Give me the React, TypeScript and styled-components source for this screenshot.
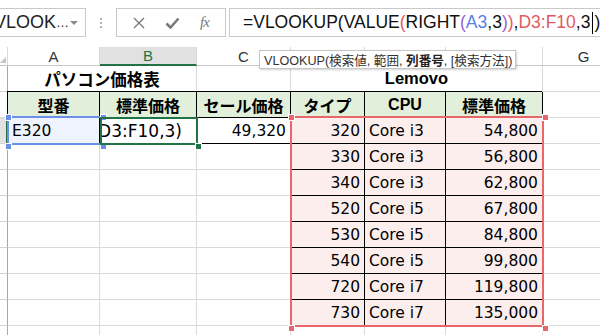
import React from 'react'
import styled, { createGlobalStyle } from 'styled-components'

const GlobalStyle = createGlobalStyle`
  html, body { margin: 0; padding: 0; background: #fff; }
  body {
    width: 600px;
    height: 335px;
    overflow: hidden;
    font-family: "Liberation Sans", "Noto Sans CJK JP", sans-serif;
  }
`

const GREEN = '#217346'
const RED = '#e8676b'
const BLUE = '#6b90ea'
const COLS = [8, 92, 97, 94, 74, 81, 97, 82]

const Page = styled.div`
  position: relative;
  width: 600px;
  height: 335px;
  overflow: hidden;
  background: #fff;
`

/* ---------- formula bar ---------- */

const Toolbar = styled.div`
  display: flex;
  align-items: flex-start;
  height: 47px;
  padding-top: 8px;
  box-sizing: border-box;
`

const Box = styled.div`
  height: 29px;
  box-sizing: border-box;
  border: 1px solid #c9c9c9;
  background: #fff;
  display: flex;
  align-items: center;
`

const NameBox = styled(Box)`
  margin-left: -20px;
  width: 106px;
  padding-left: 13px;
  font-size: 18px;
  color: #222;
  position: relative;
`

const Ellipsis = styled.span`
  font-size: 13px;
`

const DropArrow = styled.span`
  position: absolute;
  right: 7px;
  top: 12px;
  width: 0;
  height: 0;
  border-left: 4px solid transparent;
  border-right: 4px solid transparent;
  border-top: 4px solid #8a8a8a;
`

const Grip = styled.div`
  width: 30px;
  height: 29px;
  display: flex;
  align-items: center;
  justify-content: center;
`

const FuncBox = styled(Box)`
  width: 110px;
  justify-content: space-around;
  padding: 0 6px;
`

const Fx = styled.span`
  font-family: "Liberation Serif", serif;
  font-style: italic;
  font-size: 15px;
  color: #7a7a7a;
  letter-spacing: -1px;
`

const FormulaBox = styled(Box)`
  margin-left: 3px;
  flex: 1;
  margin-right: -20px;
  padding-left: 13px;
  font-size: 17.5px;
  color: #111;
  white-space: nowrap;
`

const Tok = styled.span<{ $c?: string }>`
  color: ${p => p.$c ?? '#111'};
`

const Caret = styled.span`
  display: inline-block;
  width: 1px;
  height: 22px;
  background: #000;
  vertical-align: middle;
  margin: 0 1px 0 2px;
`

/* ---------- sheet ---------- */

const Sheet = styled.div`
  display: grid;
  grid-template-columns: ${COLS.map(w => w + 'px').join(' ')};
  grid-template-rows: 19px repeat(11, 26px);
`

const ColHead = styled.div<{ $sel?: boolean }>`
  box-sizing: border-box;
  display: flex;
  align-items: center;
  justify-content: center;
  font-size: 15px;
  color: ${p => (p.$sel ? GREEN : '#333')};
  background: ${p => (p.$sel ? '#e1e1e1' : '#fff')};
  border-right: 1px solid #dadada;
  border-bottom: ${p => (p.$sel ? `2px solid ${GREEN}` : '1px solid #c8c8c8')};
`

const Corner = styled(ColHead)`
  position: relative;
  &::after {
    content: '';
    position: absolute;
    right: 1px;
    bottom: 2px;
    border-left: 6px solid transparent;
    border-bottom: 6px solid #c4c4c4;
  }
`

const RowHead = styled.div<{ $r: number; $sel?: boolean }>`
  grid-column: 1;
  grid-row: ${p => p.$r + 1};
  box-sizing: border-box;
  background: ${p => (p.$sel ? '#e1e1e1' : '#fff')};
  border-bottom: 1px solid #d4d4d4;
  border-right: ${p => (p.$sel ? `2px solid ${GREEN}` : '1px solid #a8a8a8')};
`

type Kind = 'title' | 'head' | 'data' | 'edit' | 'empty'

const Cell = styled.div<{
  $c: number
  $r: number
  $span: number
  $kind: Kind
  $align: string
  $bg: string
  $edge: boolean
}>`
  grid-column: ${p => p.$c} / span ${p => p.$span};
  grid-row: ${p => p.$r + 1};
  box-sizing: border-box;
  display: flex;
  align-items: center;
  justify-content: ${p => p.$align};
  padding: 0 ${p => (p.$kind === 'edit' ? '14px' : '4px')} 0 4px;
  overflow: hidden;
  white-space: nowrap;
  background: ${p => p.$bg};
  border-right: 1px solid ${p => (p.$edge ? '#000' : '#d9d9d9')};
  border-bottom: 1px solid ${p => (p.$edge ? '#000' : '#d9d9d9')};
  box-shadow: ${p => (p.$edge ? '-1px -1px 0 0 #000' : 'none')};
  color: #000;
  font-family: ${p =>
    p.$kind === 'data' || p.$kind === 'edit'
      ? '"DejaVu Sans", "Noto Sans CJK JP", sans-serif'
      : '"Liberation Sans", "Noto Sans CJK JP", sans-serif'};
  font-size: ${p =>
    p.$kind === 'title' ? '16.5px' : p.$kind === 'head' ? '16px' : p.$kind === 'edit' ? '17px' : '15.5px'};
  font-weight: ${p => (p.$kind === 'title' || p.$kind === 'head' ? 700 : 400)};
`

/* ---------- overlays ---------- */

const Range = styled.div<{ $color: string; $w: number }>`
  position: absolute;
  box-sizing: border-box;
  border: ${p => p.$w}px solid ${p => p.$color};
  pointer-events: none;
`

const Handle = styled.span<{ $color: string }>`
  position: absolute;
  width: 5px;
  height: 5px;
  background: ${p => p.$color};
  border: 1px solid #fff;
`

const Tooltip = styled.div`
  position: absolute;
  left: 259px;
  top: 50px;
  width: 257px;
  height: 19px;
  box-sizing: border-box;
  border: 1px solid #c6c6c6;
  background: #fff;
  box-shadow: 1px 1px 2px rgba(0, 0, 0, 0.18);
  font-size: 12.6px;
  color: #333;
  display: flex;
  align-items: center;
  padding-left: 4px;
  white-space: pre;
`

const Bold = styled.b`
  font-weight: 700;
  color: #222;
`

type Def = {
  c: number
  r: number
  span?: number
  kind?: Kind
  text?: React.ReactNode
  align?: string
  bg?: string
  edge?: boolean
}

const lenovo: [string, string, string][] = [
  ['320', 'Core i3', '54,800'],
  ['330', 'Core i3', '56,800'],
  ['340', 'Core i3', '62,800'],
  ['520', 'Core i5', '67,800'],
  ['530', 'Core i5', '84,800'],
  ['540', 'Core i5', '99,800'],
  ['720', 'Core i7', '119,800'],
  ['730', 'Core i7', '135,000'],
]

const HEAD_BG = '#e2efda'
const PINK = '#fdeeee'

function buildCells(): Def[] {
  const cells: Def[] = []
  // row 1
  cells.push({ c: 2, r: 1, span: 2, kind: 'title', text: 'パソコン価格表', align: 'center' })
  cells.push({ c: 4, r: 1 })
  cells.push({ c: 5, r: 1, span: 3, kind: 'title', text: 'Lemovo', align: 'center' })
  cells.push({ c: 8, r: 1 })
  // row 2
  const heads = ['型番', '標準価格', 'セール価格', 'タイプ', 'CPU', '標準価格']
  heads.forEach((h, i) =>
    cells.push({ c: i + 2, r: 2, kind: 'head', text: h, align: 'center', bg: HEAD_BG, edge: true })
  )
  cells.push({ c: 8, r: 2 })
  // rows 3..11
  for (let r = 3; r <= 11; r++) {
    const d = lenovo[r - 3]
    if (r === 3) {
      cells.push({ c: 2, r, kind: 'data', text: 'E320', align: 'flex-start', bg: '#eef3fd', edge: true })
      cells.push({
        c: 3,
        r,
        kind: 'edit',
        text: '=VLOOKUP(VALUE(RIGHT(A3,3)),D3:F10,3)',
        align: 'flex-end',
        edge: true,
      })
      cells.push({ c: 4, r, kind: 'data', text: '49,320', align: 'flex-end', edge: true })
    } else {
      cells.push({ c: 2, r }, { c: 3, r }, { c: 4, r })
    }
    if (d) {
      cells.push({ c: 5, r, kind: 'data', text: d[0], align: 'flex-end', bg: PINK, edge: true })
      cells.push({ c: 6, r, kind: 'data', text: d[1], align: 'flex-start', bg: PINK, edge: true })
      cells.push({ c: 7, r, kind: 'data', text: d[2], align: 'flex-end', bg: PINK, edge: true })
    } else {
      cells.push({ c: 5, r }, { c: 6, r }, { c: 7, r })
    }
    cells.push({ c: 8, r })
  }
  return cells
}

const Corners = ({ color, w, h }: { color: string; w: number; h: number }) => (
  <>
    <Handle $color={color} style={{ left: -4, top: -4 }} />
    <Handle $color={color} style={{ left: w - 4, top: -4 }} />
    <Handle $color={color} style={{ left: -4, top: h - 4 }} />
    <Handle $color={color} style={{ left: w - 4, top: h - 4 }} />
  </>
)

export default function App() {
  const cells = buildCells()
  const rowsByIndex = Array.from({ length: 11 }, (_, i) => i + 1)
  return (
    <Page>
      <GlobalStyle />
      <Toolbar>
        <NameBox>
          VLOOK<Ellipsis>…</Ellipsis>
          <DropArrow />
        </NameBox>
        <Grip>
          <svg width="4" height="12" viewBox="0 0 4 12">
            <circle cx="2" cy="2" r="1" fill="#9a9a9a" />
            <circle cx="2" cy="6" r="1" fill="#9a9a9a" />
            <circle cx="2" cy="10" r="1" fill="#9a9a9a" />
          </svg>
        </Grip>
        <FuncBox>
          <svg width="12" height="12" viewBox="0 0 12 12">
            <path d="M1 1 L11 11 M11 1 L1 11" stroke="#7a7a7a" strokeWidth="1.4" />
          </svg>
          <svg width="15" height="12" viewBox="0 0 15 12">
            <path d="M1.5 6.5 L5.5 10.5 L13.5 1.5" stroke="#7a7a7a" strokeWidth="2.6" fill="none" />
          </svg>
          <Fx>fx</Fx>
        </FuncBox>
        <FormulaBox>
          <Tok>=VLOOKUP(VALUE</Tok>
          <Tok $c="#e25a60">(</Tok>
          <Tok>RIGHT</Tok>
          <Tok $c="#9b5fd2">(</Tok>
          <Tok $c="#5b7fe6">A3</Tok>
          <Tok>,3</Tok>
          <Tok $c="#9b5fd2">)</Tok>
          <Tok $c="#e25a60">)</Tok>
          <Tok>,</Tok>
          <Tok $c="#e25a60">D3:F10</Tok>
          <Tok>,3</Tok>
          <Caret />
          <Tok>)</Tok>
        </FormulaBox>
      </Toolbar>

      <Sheet>
        <Corner />
        {['A', 'B', 'C', 'D', 'E', 'F', 'G'].map(l => (
          <ColHead key={l} $sel={l === 'B'}>
            {l}
          </ColHead>
        ))}
        {rowsByIndex.map(r => (
          <React.Fragment key={r}>
            <RowHead $r={r} $sel={r === 3} />
            {cells
              .filter(d => d.r === r)
              .map(d => (
                <Cell
                  key={`${d.c}-${d.r}`}
                  $c={d.c}
                  $r={d.r}
                  $span={d.span ?? 1}
                  $kind={d.kind ?? 'empty'}
                  $align={d.align ?? 'flex-start'}
                  $bg={d.bg ?? '#fff'}
                  $edge={!!d.edge}
                >
                  {d.text}
                </Cell>
              ))}
          </React.Fragment>
        ))}
      </Sheet>

      <Range $color={BLUE} $w={2} style={{ left: 7, top: 116, width: 95, height: 29 }}>
        <Corners color={BLUE} w={95} h={29} />
      </Range>
      <Range $color={GREEN} $w={2} style={{ left: 100, top: 117, width: 98, height: 28 }}>
        <Handle $color={GREEN} style={{ left: 93, top: 24 }} />
      </Range>
      <Range $color={RED} $w={2} style={{ left: 290, top: 116, width: 254, height: 211 }}>
        <Corners color={RED} w={254} h={211} />
      </Range>

      <Tooltip>
        {'VLOOKUP(検索値, 範囲, '}
        <Bold>列番号</Bold>
        {', [検索方法])'}
      </Tooltip>
    </Page>
  )
}
